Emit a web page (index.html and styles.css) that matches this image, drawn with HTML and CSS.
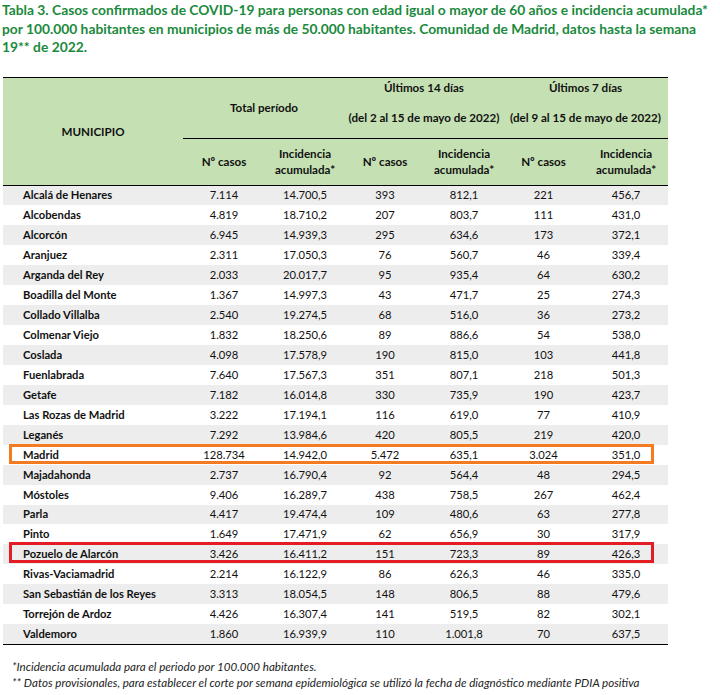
FILE: index.html
```html
<!DOCTYPE html>
<html lang="es">
<head>
<meta charset="utf-8">
<title>Tabla 3</title>
<link rel="stylesheet" href="styles.css">
</head>
<body>
<h1 class="title">Tabla 3. Casos confirmados de COVID-19 para personas con edad igual o mayor de 60 años e incidencia acumulada*<br>por 100.000 habitantes en municipios de más de 50.000 habitantes. Comunidad de Madrid, datos hasta la semana<br>19** de 2022.</h1>
<table class="data">
  <colgroup>
    <col class="c-mun"><col class="c1"><col class="c2"><col class="c3"><col class="c4"><col class="c5"><col class="c6">
  </colgroup>
  <thead>
    <tr class="grp">
      <th rowspan="2" class="mun-h">MUNICIPIO</th>
      <th colspan="2" class="g-total">Total período</th>
      <th colspan="2" class="g-per"><div class="l1">Últimos 14 días</div><div class="l2">(del 2 al 15 de mayo de 2022)</div></th>
      <th colspan="2" class="g-per"><div class="l1">Últimos 7 días</div><div class="l2">(del 9 al 15 de mayo de 2022)</div></th>
    </tr>
    <tr class="sub">
      <th>Nº casos</th><th>Incidencia<br>acumulada*</th>
      <th>Nº casos</th><th>Incidencia<br>acumulada*</th>
      <th>Nº casos</th><th>Incidencia<br>acumulada*</th>
    </tr>
  </thead>
  <tbody>
    <tr><td>Alcalá de Henares</td><td>7.114</td><td>14.700,5</td><td>393</td><td>812,1</td><td>221</td><td>456,7</td></tr>
    <tr><td>Alcobendas</td><td>4.819</td><td>18.710,2</td><td>207</td><td>803,7</td><td>111</td><td>431,0</td></tr>
    <tr><td>Alcorcón</td><td>6.945</td><td>14.939,3</td><td>295</td><td>634,6</td><td>173</td><td>372,1</td></tr>
    <tr><td>Aranjuez</td><td>2.311</td><td>17.050,3</td><td>76</td><td>560,7</td><td>46</td><td>339,4</td></tr>
    <tr><td>Arganda del Rey</td><td>2.033</td><td>20.017,7</td><td>95</td><td>935,4</td><td>64</td><td>630,2</td></tr>
    <tr><td>Boadilla del Monte</td><td>1.367</td><td>14.997,3</td><td>43</td><td>471,7</td><td>25</td><td>274,3</td></tr>
    <tr><td>Collado Villalba</td><td>2.540</td><td>19.274,5</td><td>68</td><td>516,0</td><td>36</td><td>273,2</td></tr>
    <tr><td>Colmenar Viejo</td><td>1.832</td><td>18.250,6</td><td>89</td><td>886,6</td><td>54</td><td>538,0</td></tr>
    <tr><td>Coslada</td><td>4.098</td><td>17.578,9</td><td>190</td><td>815,0</td><td>103</td><td>441,8</td></tr>
    <tr><td>Fuenlabrada</td><td>7.640</td><td>17.567,3</td><td>351</td><td>807,1</td><td>218</td><td>501,3</td></tr>
    <tr><td>Getafe</td><td>7.182</td><td>16.014,8</td><td>330</td><td>735,9</td><td>190</td><td>423,7</td></tr>
    <tr><td>Las Rozas de Madrid</td><td>3.222</td><td>17.194,1</td><td>116</td><td>619,0</td><td>77</td><td>410,9</td></tr>
    <tr><td>Leganés</td><td>7.292</td><td>13.984,6</td><td>420</td><td>805,5</td><td>219</td><td>420,0</td></tr>
    <tr class="hl-orange"><td>Madrid</td><td>128.734</td><td>14.942,0</td><td>5.472</td><td>635,1</td><td>3.024</td><td>351,0</td></tr>
    <tr><td>Majadahonda</td><td>2.737</td><td>16.790,4</td><td>92</td><td>564,4</td><td>48</td><td>294,5</td></tr>
    <tr><td>Móstoles</td><td>9.406</td><td>16.289,7</td><td>438</td><td>758,5</td><td>267</td><td>462,4</td></tr>
    <tr><td>Parla</td><td>4.417</td><td>19.474,4</td><td>109</td><td>480,6</td><td>63</td><td>277,8</td></tr>
    <tr><td>Pinto</td><td>1.649</td><td>17.471,9</td><td>62</td><td>656,9</td><td>30</td><td>317,9</td></tr>
    <tr class="hl-red"><td>Pozuelo de Alarcón</td><td>3.426</td><td>16.411,2</td><td>151</td><td>723,3</td><td>89</td><td>426,3</td></tr>
    <tr><td>Rivas-Vaciamadrid</td><td>2.214</td><td>16.122,9</td><td>86</td><td>626,3</td><td>46</td><td>335,0</td></tr>
    <tr><td>San Sebastián de los Reyes</td><td>3.313</td><td>18.054,5</td><td>148</td><td>806,5</td><td>88</td><td>479,6</td></tr>
    <tr><td>Torrejón de Ardoz</td><td>4.426</td><td>16.307,4</td><td>141</td><td>519,5</td><td>82</td><td>302,1</td></tr>
    <tr><td>Valdemoro</td><td>1.860</td><td>16.939,9</td><td>110</td><td>1.001,8</td><td>70</td><td>637,5</td></tr>
  </tbody>
</table>
<div class="notes">
  <p>*Incidencia acumulada para el periodo por 100.000 habitantes.</p>
  <p>** Datos provisionales, para establecer el corte por semana epidemiológica se utilizó la fecha de diagnóstico mediante PDIA positiva</p>
</div>
</body>
</html>
```
FILE: styles.css
```css
html, body {
  margin: 0;
  padding: 0;
  background: #ffffff;
}
body {
  font-family: Lato, "Open Sans", "Liberation Sans", sans-serif;
  color: #111;
}
.title {
  margin: 0;
  padding: 1px 0 0 2px;
  font-size: 13.8px;
  line-height: 18.5px;
  font-weight: 700;
  color: #1b8a3d;
  white-space: nowrap;
}
.data {
  margin: 20px 0 0 3px;
  width: 665px;
  border-collapse: collapse;
  table-layout: fixed;
  font-size: 11.6px;
}
.c-mun { width: 180px; }
.c1 { width: 82px; }
.c2 { width: 80px; }
.c3 { width: 80px; }
.c4 { width: 78px; }
.c5 { width: 81px; }
.c6 { width: 84px; }

.data thead th {
  background: #c5e0b3;
  font-weight: 700;
  color: #111;
  padding: 0;
  text-align: center;
}
.data thead tr.grp th {
  border-top: 1.5px solid #000;
  height: 60px;
}
.mun-h {
  border-bottom: 1.5px solid #000;
}
.g-total, .g-per {
  border-bottom: 1px solid #000;
}
.g-total { vertical-align: middle; }
.g-per { vertical-align: top; }
.g-per .l1 {
  line-height: 16px;
  margin-top: 2px;
}
.g-per .l2 {
  line-height: 16px;
  margin-top: 14px;
}
.data thead tr.sub th {
  height: 46px;
  line-height: 15.5px;
  border-bottom: 1.5px solid #000;
  vertical-align: middle;
}
.data tbody td {
  height: 19.95px;
  padding: 0;
  text-align: center;
  line-height: 14px;
  font-size: 11.2px;
  color: #111;
}
.data tbody td:first-child {
  text-align: left;
  padding-left: 20px;
  font-weight: 700;
  position: relative;
}
.data tbody tr:nth-child(odd) td {
  background: #ededed;
}
.data tbody tr:last-child td {
  border-bottom: 1.5px solid #000;
}
.hl-orange td:first-child::after,
.hl-red td:first-child::after {
  content: "";
  position: absolute;
  left: 6px;
  top: 0;
  bottom: 0;
  width: 645px;
  box-sizing: border-box;
  pointer-events: none;
}
.hl-orange td:first-child::after {
  border: 3px solid #f47b20;
  top: -1px;
  bottom: 1px;
}
.hl-red td:first-child::after {
  border: 3px solid #e41c24;
  top: -2px;
  bottom: 1px;
}
.notes {
  margin-top: 14px;
  padding-left: 12px;
  font-style: italic;
  font-size: 11.6px;
  line-height: 16px;
  color: #222;
}
.notes p {
  margin: 0;
}
```
